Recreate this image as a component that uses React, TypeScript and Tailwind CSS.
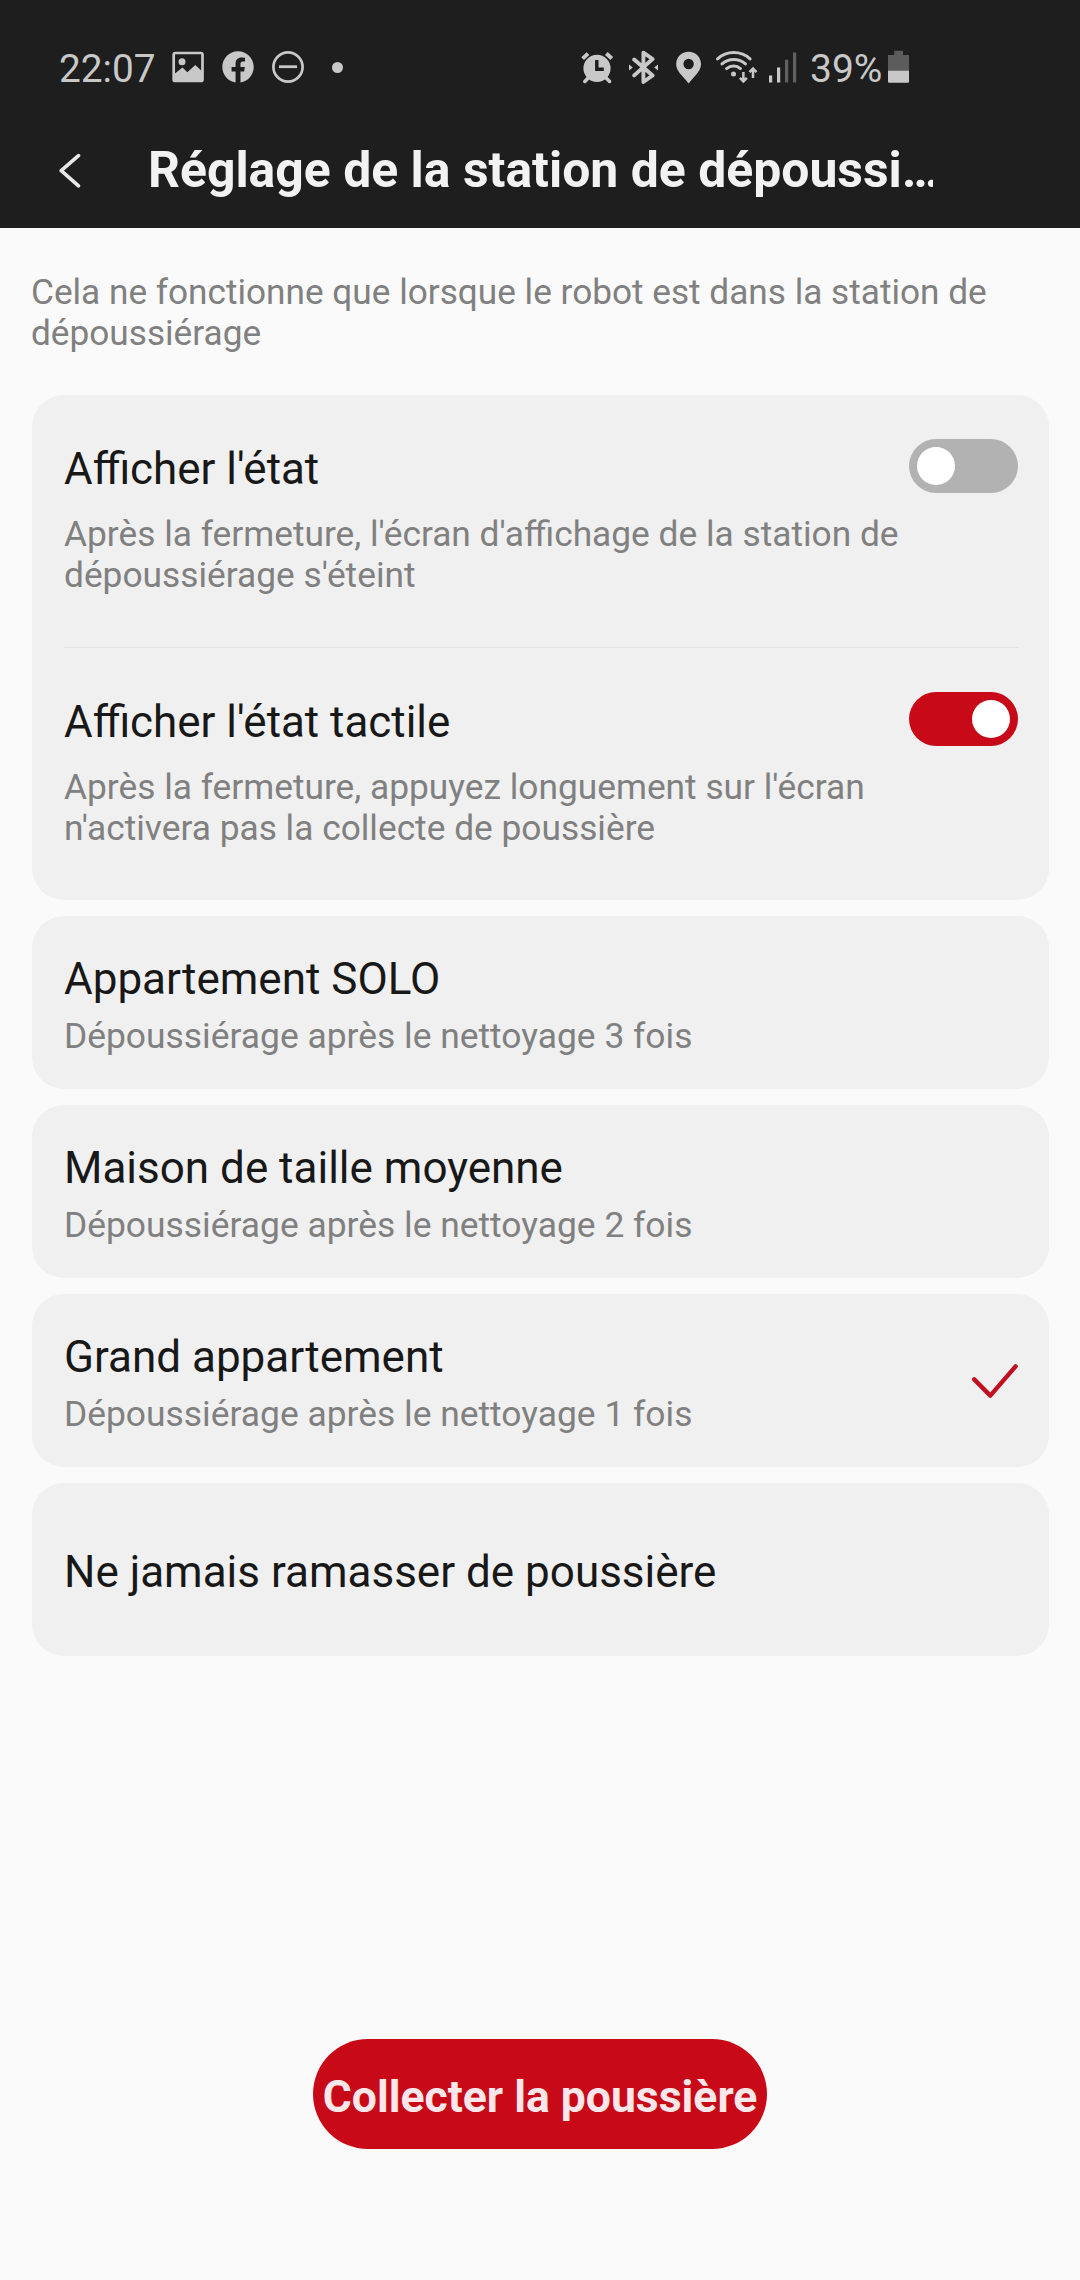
import { useState } from 'react';

function StatusBar() {
  return (
    <div className="flex h-[112px] items-center pt-[22px] pl-[59px] text-[#c8c8c8]">
      <span className="w-[97px] pt-[3px] text-[38.8px] leading-[46px]">22:07</span>
      <svg className="ml-4 shrink-0" width="32" height="34" viewBox="0 0 32 34" fill="none">
        <rect x="1.7" y="3" width="28.8" height="28" rx="1.6" stroke="currentColor" strokeWidth="2.7" />
        <circle cx="10" cy="11.7" r="3.5" fill="currentColor" />
        <path d="M2 24.2 10.5 17.6 15.3 22.3 23.3 15 30 21.2V31H2Z" fill="currentColor" />
      </svg>
      <svg className="ml-[18px] shrink-0" width="32" height="34" viewBox="0 0 32 34">
        <path
          transform="translate(.3 1.2) scale(1.31)"
          fill="currentColor"
          d="M24 12.073c0-6.627-5.373-12-12-12s-12 5.373-12 12c0 5.99 4.388 10.954 10.125 11.854v-8.385H7.078v-3.47h3.047V9.43c0-3.007 1.792-4.669 4.533-4.669 1.312 0 2.686.235 2.686.235v2.953H15.83c-1.491 0-1.956.925-1.956 1.874v2.25h3.328l-.532 3.47h-2.796v8.385C19.612 23.027 24 18.062 24 12.073z"
        />
      </svg>
      <svg className="ml-[18px] shrink-0" width="32" height="34" viewBox="0 0 32 34" fill="none" stroke="currentColor">
        <circle cx="16" cy="17" r="14.6" strokeWidth="2.7" />
        <path d="M7 16.7h18" strokeWidth="2.8" />
      </svg>
      <span className="ml-7 size-[11px] rounded-full bg-[#c8c8c8]" />

      <svg className="ml-[238px] shrink-0" width="33" height="34" viewBox="0 0 33 34" fill="none" stroke="currentColor">
        <circle cx="16" cy="18.3" r="13.6" fill="currentColor" stroke="none" />
        <path d="M1.6 8.6 7 3.6M25.3 3.6 30.8 8.6" strokeWidth="4" />
        <path d="M3.8 31.4 7.2 28M28.6 31.4 25.2 28" strokeWidth="3.6" strokeLinecap="round" />
        <path d="M15.8 10v9.2h7" stroke="#1e1e1e" strokeWidth="3.4" />
      </svg>
      <svg className="ml-[15px] shrink-0" width="30" height="34" viewBox="0 0 30 34">
        <path
          d="M5.2 9.6 23.6 25.4 14.4 32V2.6L23.6 9 5.2 25.4"
          fill="none"
          stroke="currentColor"
          strokeWidth="3.9"
          strokeLinecap="round"
          strokeLinejoin="round"
        />
        <path d="M0 14.6 3.8 17.6 0 20.6ZM29 14.6 25.2 17.6 29 20.6Z" fill="currentColor" />
      </svg>
      <svg className="ml-[17px] shrink-0" width="26" height="34" viewBox="0 0 26 34">
        <path
          fillRule="evenodd"
          fill="currentColor"
          d="M12.6 1.8C5.6 1.8.2 7.2.2 13.9c0 4.6 2.6 8 5.6 11.7 2.4 2.9 4.7 5.3 6.8 7.9 2.1-2.6 4.400-5 6.800-7.900 3-3.700 5.600-7.100 5.600-11.700 0-6.700-5.400-12.100-12.400-12.100Zm0 7a5.200 5.200 0 1 1 0 10.400 5.200 5.200 0 0 1 0-10.400Z"
        />
      </svg>
      <svg className="ml-[14px] shrink-0" width="42" height="34" viewBox="0 0 42 34" fill="none" stroke="currentColor" strokeWidth="3" strokeLinecap="round">
        <path d="M1.6 8.9C10.6.5 25 .5 34 8.9M6 13.9c6.6-6 17-6 23.4 0M10.6 18.6c4-3.5 10-3.5 13.8 0" />
        <circle cx="17.5" cy="24" r="2.5" fill="currentColor" stroke="none" />
        <path d="M27.4 22v9M23.9 27.8l3.5 3.6 3.5-3.6M37 28v-9M33.5 22.2l3.5-3.6 3.5 3.6" strokeWidth="2.5" strokeLinecap="butt" />
      </svg>
      <svg className="ml-[11px] shrink-0" width="28" height="34" viewBox="0 0 28 34">
        <path d="M0 25.5h3.2v7H0ZM8 17.5h3.2v15H8Z" fill="currentColor" />
        <path d="M16 9.7h3.2v22.800h-3.2ZM24 2.5h3.2v30h-3.2Z" fill="#616161" />
      </svg>
      <span className="ml-[13px] w-[73px] pt-[3px] text-[39px] leading-[46px]">39%</span>
      <svg className="ml-[5px] shrink-0" width="22" height="34" viewBox="0 0 22 34">
        <path d="M6.2.7h8.8V5h6v16H0V5h6.2Z" fill="#5c5c5c" />
        <path d="M0 20.8h21V31.7a1 1 0 0 1-1 1H1a1 1 0 0 1-1-1Z" fill="currentColor" />
      </svg>
    </div>
  );
}

function AppBar() {
  return (
    <div className="flex h-[116px] items-center pl-[58px]">
      <svg className="shrink-0" width="24" height="36" viewBox="0 0 24 36" fill="none">
        <path d="M20.5 3.6 3.2 18.7 20.5 33.8" stroke="#e8e8e8" strokeWidth="3.6" strokeLinecap="round" strokeLinejoin="round" />
      </svg>
      <h1 className="ml-[66px] w-[785px] overflow-hidden text-[49.9px] leading-[60px] font-bold whitespace-nowrap text-[#f2f2f2]">
        Réglage de la station de dépoussi…
      </h1>
    </div>
  );
}

function Toggle({ on, onChange }: { on: boolean; onChange: () => void }) {
  return (
    <button
      role="switch"
      aria-checked={on}
      onClick={onChange}
      className={
        on
          ? 'flex h-[54px] w-[109px] shrink-0 items-center justify-end rounded-full bg-[#c80a18] px-2'
          : 'flex h-[54px] w-[109px] shrink-0 items-center justify-start rounded-full bg-[#b2b2b2] px-2'
      }
    >
      <span className="size-[38px] rounded-full bg-white" />
    </button>
  );
}

function SwitchRow({ title, lines, initial }: { title: string; lines: string[]; initial: boolean }) {
  const [on, setOn] = useState(initial);
  return (
    <div className="h-[252px] pt-11">
      <div className="flex h-[55px] items-start justify-between">
        <h2 className="mt-1 text-[43.9px] leading-[52px] text-[#181818]">{title}</h2>
        <Toggle on={on} onChange={() => setOn(!on)} />
      </div>
      <p className="mt-5 text-[35.3px] leading-[41.3px] whitespace-nowrap text-[#808080]">
        {lines[0]}
        <br />
        {lines[1]}
      </p>
    </div>
  );
}

const options = [
  { title: 'Appartement SOLO', detail: 'Dépoussiérage après le nettoyage 3 fois' },
  { title: 'Maison de taille moyenne', detail: 'Dépoussiérage après le nettoyage 2 fois' },
  { title: 'Grand appartement', detail: 'Dépoussiérage après le nettoyage 1 fois' },
  { title: 'Ne jamais ramasser de poussière', detail: '' },
];

export default function App() {
  const [selected, setSelected] = useState(2);
  return (
    <div className="flex h-[2280px] w-[1080px] flex-col bg-[#fafafa] font-[Roboto,sans-serif]">
      <header className="bg-[#1e1e1e]">
        <StatusBar />
        <AppBar />
      </header>

      <main className="flex flex-col pt-[43.6px] pr-[31px] pl-8">
        <p className="-ml-px text-[35.2px] leading-[41.3px] text-[#808080]">
          Cela ne fonctionne que lorsque le robot est dans la station de
          <br />
          dépoussiérage
        </p>

        <div className="mt-[40.8px] flex flex-col gap-4">
          <section className="h-[505px] rounded-[32px] bg-[#f0f0f0] pr-[31px] pl-8">
            <SwitchRow
              title="Afficher l'état"
              lines={["Après la fermeture, l'écran d'affichage de la station de", "dépoussiérage s'éteint"]}
              initial={false}
            />
            <div className="h-px bg-[#e2e2e2]" />
            <SwitchRow
              title="Afficher l'état tactile"
              lines={["Après la fermeture, appuyez longuement sur l'écran", "n'activera pas la collecte de poussière"]}
              initial={true}
            />
          </section>

          {options.map((o, i) => (
            <div
              key={o.title}
              onClick={() => setSelected(i)}
              className="flex h-[173px] items-center justify-between rounded-[32px] bg-[#f0f0f0] pr-[31px] pl-8"
            >
              <div className="flex flex-col gap-[11px] pt-[5px]">
                <h2 className="text-[44px] leading-[52px] text-[#181818]">{o.title}</h2>
                {o.detail && <p className="text-[35.4px] leading-[41px] text-[#808080]">{o.detail}</p>}
              </div>
              {i === selected && (
                <svg className="mt-px" width="46" height="34" viewBox="0 0 46 34" fill="none">
                  <path d="M2.2 15.4 18.3 31.6 43.6 2.4" stroke="#c01020" strokeWidth="4.4" strokeLinecap="round" strokeLinejoin="round" />
                </svg>
              )}
            </div>
          ))}
        </div>
      </main>

      <button className="mx-auto mt-auto mb-[131px] flex h-[110px] w-[454px] items-center justify-center rounded-full bg-[#c80a18] pt-[5px] text-[44.5px] leading-[52px] font-bold whitespace-nowrap text-[#fbe7e9]">
        Collecter la poussière
      </button>
    </div>
  );
}
